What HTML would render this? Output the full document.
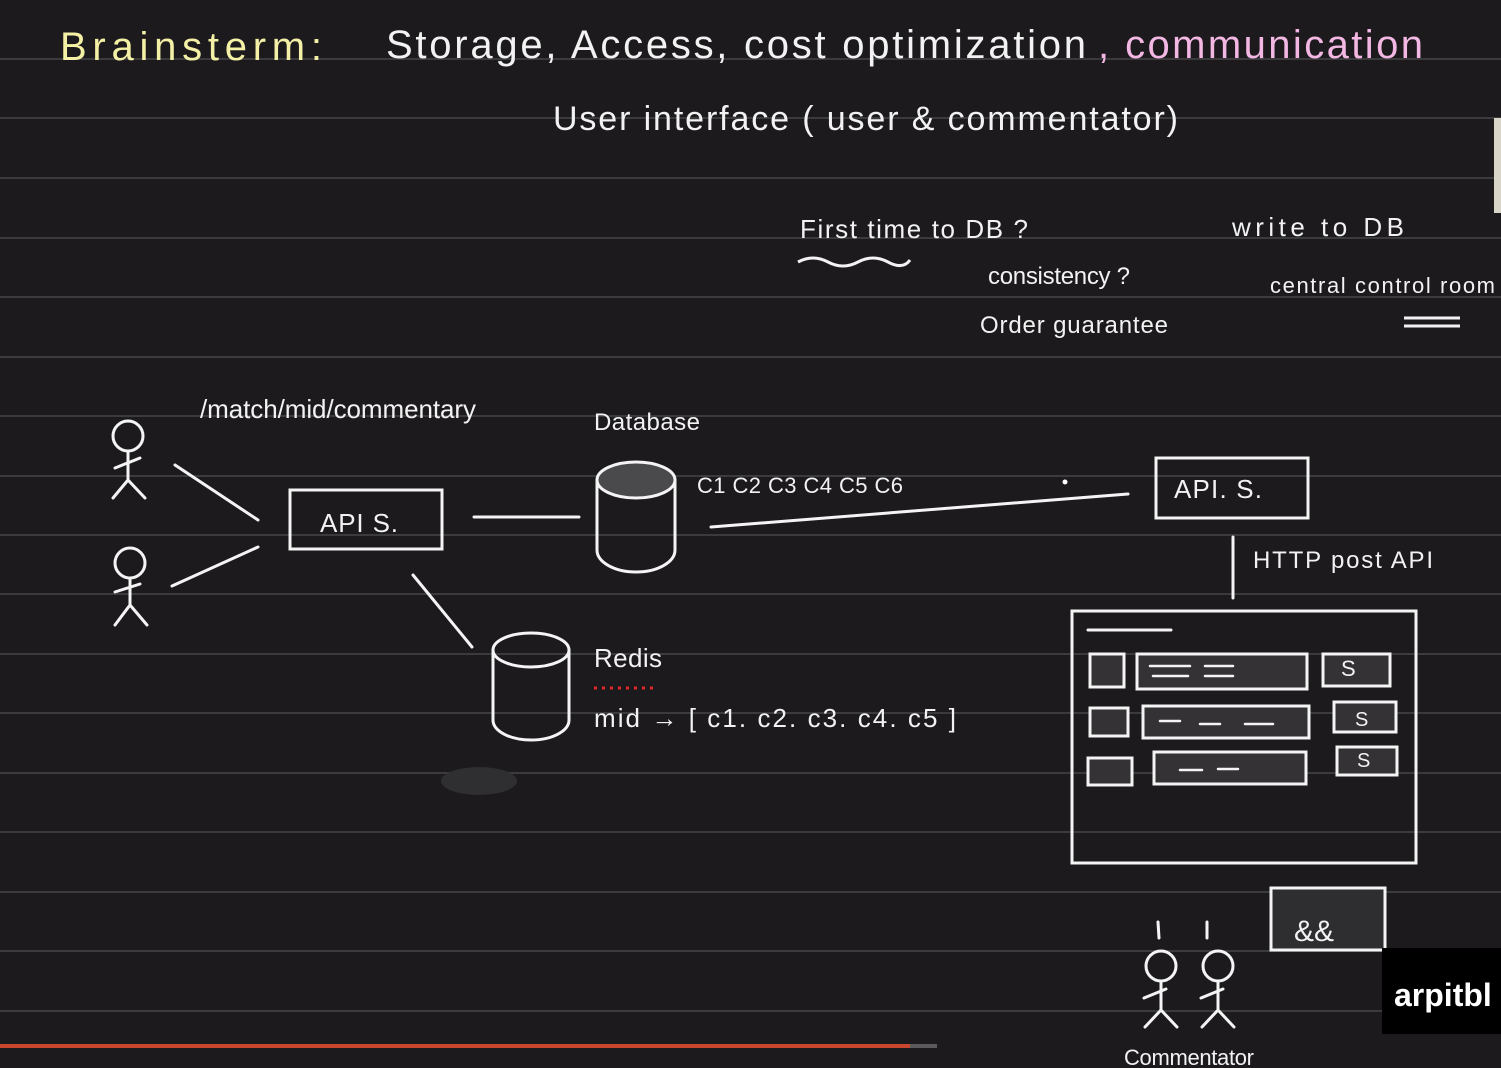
<!DOCTYPE html>
<html><head><meta charset="utf-8"><style>
html,body{margin:0;padding:0;background:#1c1a1d;}
svg{display:block;}
text{font-family:"Liberation Sans",sans-serif;fill:#f2f2f2;}
</style></head><body>
<svg width="1501" height="1068" viewBox="0 0 1501 1068" xmlns="http://www.w3.org/2000/svg">
<rect width="1501" height="1068" fill="#1c1a1d"/>
<g stroke="#3b3a3d" stroke-width="2">
<line x1="0" y1="59" x2="1501" y2="59"/><line x1="0" y1="118" x2="1501" y2="118"/>
<line x1="0" y1="178" x2="1501" y2="178"/><line x1="0" y1="238" x2="1501" y2="238"/>
<line x1="0" y1="297" x2="1501" y2="297"/><line x1="0" y1="357" x2="1501" y2="357"/>
<line x1="0" y1="416" x2="1501" y2="416"/><line x1="0" y1="476" x2="1501" y2="476"/>
<line x1="0" y1="535" x2="1501" y2="535"/><line x1="0" y1="594" x2="1501" y2="594"/>
<line x1="0" y1="654" x2="1501" y2="654"/><line x1="0" y1="713" x2="1501" y2="713"/>
<line x1="0" y1="773" x2="1501" y2="773"/><line x1="0" y1="832" x2="1501" y2="832"/>
<line x1="0" y1="892" x2="1501" y2="892"/><line x1="0" y1="951" x2="1501" y2="951"/>
<line x1="0" y1="1011" x2="1501" y2="1011"/>
</g>
<text x="60" y="60" font-size="40" style="fill:#f4f0a6" textLength="262">Brainsterm:</text>
<text x="386" y="58" font-size="40" textLength="700">Storage, Access, cost optimization</text>
<text x="1098" y="58" font-size="40" style="fill:#f3b7e3" textLength="325">, communication</text>
<text x="553" y="130" font-size="34" textLength="625">User interface ( user &amp; commentator)</text>
<text x="800" y="238" font-size="26" textLength="228">First time to DB ?</text>
<path d="M798 262 q15 -8 30 0 t30 0 t30 0 t22 -2" stroke="#f2f2f2" stroke-width="3" fill="none"/>
<text x="1232" y="236" font-size="26" textLength="172">write to DB</text>
<text x="988" y="284" font-size="24" textLength="142">consistency ?</text>
<text x="1270" y="293" font-size="22" textLength="225">central control room</text>
<path d="M1404 318 h56 M1404 326 h56" stroke="#f2f2f2" stroke-width="3"/>
<text x="980" y="333" font-size="24" textLength="188">Order guarantee</text>
<text x="200" y="418" font-size="26" textLength="276">/match/mid/commentary</text>
<text x="594" y="430" font-size="24" textLength="106">Database</text>
<g stroke="#f4f4f4" stroke-width="3" fill="none" stroke-linecap="round">
<!-- stick figures left -->
<circle cx="128" cy="436" r="15"/><path d="M128 451 V480 M115 468 l25 -10 M128 480 l-15 18 M128 480 l17 18"/>
<circle cx="130" cy="563" r="15"/><path d="M130 578 V605 M115 592 l25 -8 M130 605 l-15 20 M130 605 l17 20"/>
<path d="M175 465 L258 520 M172 586 L258 547"/>
<rect x="290" y="490" width="152" height="59"/>
<path d="M474 517 H579 M413 575 L472 647"/>
<!-- db cylinder -->
<path d="M597 480 V550 A39 22 0 0 0 675 550 V480"/>
<ellipse cx="636" cy="480" rx="39" ry="18" fill="#4a494c"/>
<path d="M711 527 L1128 494"/>
<rect x="1156" y="458" width="152" height="60"/>
<path d="M1233 537 V598"/>
<!-- redis -->
<path d="M493 650 V720 A38 20 0 0 0 569 720 V650"/>
<ellipse cx="531" cy="650" rx="38" ry="17"/>
<!-- big screen -->
<rect x="1072" y="611" width="344" height="252"/>
<path d="M1088 630 H1171"/>
<g fill="#343235">
<rect x="1090" y="654" width="34" height="33"/><rect x="1137" y="654" width="170" height="35"/><rect x="1323" y="654" width="67" height="32"/>
<rect x="1090" y="708" width="38" height="28"/><rect x="1143" y="706" width="166" height="32"/><rect x="1334" y="702" width="62" height="30"/>
<rect x="1088" y="758" width="44" height="27"/><rect x="1154" y="752" width="152" height="32"/><rect x="1337" y="747" width="60" height="28"/>
</g>
<path d="M1150 666 h40 M1153 676 h35 M1205 666 h28 M1205 676 h28 M1160 721 h20 M1200 724 h20 M1245 724 h28 M1180 770 h22 M1218 769 h20" stroke-width="2.5"/>
<rect x="1271" y="888" width="114" height="62" fill="#2e2d30"/>
<!-- commentators -->
<path d="M1158 922 l1 16 M1207 922 v16"/>
<circle cx="1161" cy="966" r="15"/><path d="M1161 981 V1010 M1144 998 l22 -9 M1161 1010 l-16 17 M1161 1010 l16 17"/>
<circle cx="1218" cy="966" r="15"/><path d="M1218 981 V1010 M1201 998 l22 -9 M1218 1010 l-16 17 M1218 1010 l16 17"/>
</g>
<text x="1294" y="941" font-size="30">&amp;&amp;</text>
<text x="697" y="493" font-size="22" textLength="206">C1 C2 C3 C4 C5 C6</text>
<text x="1174" y="498" font-size="26" textLength="88">API. S.</text>
<text x="320" y="532" font-size="26" textLength="78">API S.</text>
<text x="1253" y="568" font-size="24" textLength="180">HTTP post API</text>
<text x="594" y="667" font-size="26" textLength="68">Redis</text>
<path d="M594 688 h60" stroke="#e0242e" stroke-width="3" stroke-dasharray="3 5"/>
<text x="594" y="727" font-size="26" textLength="362">mid → [ c1. c2. c3. c4. c5 ]</text>
<text x="1341" y="676" font-size="22">S</text><text x="1355" y="726" font-size="20">S</text><text x="1357" y="767" font-size="20">S</text>
<text x="1124" y="1065" font-size="22" textLength="130">Commentator</text>
<ellipse cx="479" cy="781" rx="38" ry="14" fill="#2f2e31"/>
<circle cx="1065" cy="482" r="2.5" fill="#fff"/>
<rect x="1494" y="118" width="7" height="95" fill="#d9d6c9"/>
<rect x="1382" y="948" width="119" height="86" fill="#000"/>
<text x="1394" y="1006" font-size="32" font-weight="bold" style="fill:#fff">arpitbl</text>
<rect x="0" y="1044" width="937" height="4" fill="#5a5a5a"/>
<rect x="0" y="1044" width="910" height="4" fill="#c9462f"/>
</svg>
</body></html>
